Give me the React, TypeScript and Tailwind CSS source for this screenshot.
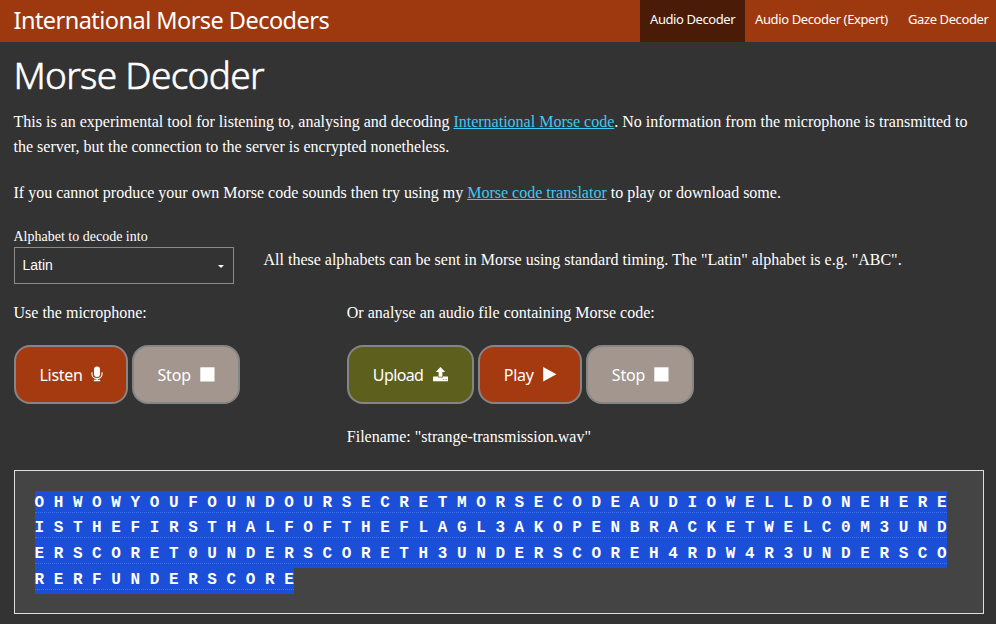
import React from "react";

const serif = "font-['Liberation_Serif',serif]";
const humanist = "font-['Noto_Sans','Open_Sans',sans-serif]";

const decodedRows = [
  "OHWOWYOUFOUNDOURSECRETMORSECODEAUDIOWELLDONEHERE",
  "ISTHEFIRSTHALFOFTHEFLAGL3AKOPENBRACKETWELC0M3UND",
  "ERSCORET0UNDERSCORETH3UNDERSCOREH4RDW4R3UNDERSCO",
  "RERFUNDERSCORE",
];

function MicIcon() {
  return (
    <svg width="12" height="16" viewBox="0 0 12 16" className="block" fill="none">
      <rect x="3" y="0.5" width="6" height="10.5" rx="3" fill="#fff" />
      <path d="M1 6.2V8.2C1 11 3 12.6 6 12.6S11 11 11 8.2V6.2" stroke="#fff" strokeWidth="1.1" />
      <path d="M6 12.5V14.5M2.8 14.5H9.2" stroke="#fff" strokeWidth="1.3" />
    </svg>
  );
}

function StopIcon() {
  return (
    <svg width="15" height="15" viewBox="0 0 15 15" className="block" fill="#fff">
      <rect x="0.3" y="0.3" width="14.2" height="14.2" />
    </svg>
  );
}

function UploadIcon() {
  return (
    <svg width="15" height="15" viewBox="0 0 15 15" className="block" fill="#fff">
      <path d="M7.5 0L12.2 5H9.4V9.7H5.6V5H2.8Z" />
      <path fillRule="evenodd" d="M0.3 9.6H5V10.5H10V9.6H14.7L15 10V14.2H0V10ZM10.3 12V12.8H11.3V12ZM12.6 12V12.8H13.6V12Z" />
    </svg>
  );
}

function PlayIcon() {
  return (
    <svg width="14" height="15" viewBox="0 0 14 15" className="block" fill="#fff">
      <path d="M0.2 0L13.4 7.3L0.2 14.5Z" />
    </svg>
  );
}

interface PadButtonProps {
  label: string;
  look: string;
  labelLook: string;
  children: React.ReactNode;
}

function PadButton({ label, look, labelLook, children }: PadButtonProps) {
  return (
    <button className={`flex h-[59px] shrink-0 items-center rounded-[16px] border-2 border-[#858585] pl-[24px] text-white ${humanist} ${look}`}>
      <span className={`mt-px shrink-0 whitespace-nowrap text-left text-[16px] leading-6 ${labelLook}`}>{label}</span>
      <span className="-mt-px">{children}</span>
    </button>
  );
}

export default function App() {
  return (
    <div className={`h-[624px] overflow-hidden bg-[#333] text-[16px] text-white ${serif}`}>
      <header className={`flex h-[42px] justify-between bg-[#9d380f] ${humanist}`}>
        <div className="whitespace-nowrap pl-[13.5px] text-[23.5px] leading-[41px] tracking-[-0.54px]">International Morse Decoders</div>
        <nav className="flex whitespace-nowrap text-[13px] leading-[39px]">
          <a className="w-[105px] bg-[#4a1b06] pl-[10px] tracking-[-0.42px]">Audio Decoder</a>
          <a className="w-[153px] pl-[10px] tracking-[-0.38px]">Audio Decoder (Expert)</a>
          <a className="w-[98px] pl-[10px] tracking-[-0.4px]">Gaze Decoder</a>
        </nav>
      </header>

      <main className="pl-[13.5px] pr-3">
        <h1 className={`h-[67px] whitespace-nowrap text-[37px] font-light leading-[66px] tracking-[-0.7px] [-webkit-text-stroke:0.6px_white] ${humanist}`}>Morse Decoder</h1>
        <p className="h-[71px] leading-[25.2px]">
          This is an experimental tool for listening to, analysing and decoding{" "}
          <a className="text-[#41c8f4] underline">International Morse code</a>. No information from the microphone is transmitted to
          the server, but the connection to the server is encrypted nonetheless.
        </p>
        <p className="h-[49px] leading-[25.6px]">
          If you cannot produce your own Morse code sounds then try using my{" "}
          <a className="text-[#41c8f4] underline">Morse code translator</a> to play or download some.
        </p>

        <div className="flex h-[71px]">
          <div className="w-[250px]">
            <div className="h-[18px] text-[14px] leading-[16px]">Alphabet to decode into</div>
            <div className="flex h-[37px] w-[220px] items-center justify-between border border-[#8a8a8a] pl-2 pr-[9px] font-['Liberation_Sans',sans-serif] text-[14px]">
              <span>Latin</span>
              <svg width="6" height="3" viewBox="0 0 6 3" fill="#fff" className="mt-px"><path d="M0 0H6L3 3Z" /></svg>
            </div>
          </div>
          <p className="pt-[18px] leading-[25.6px]">
            All these alphabets can be sent in Morse using standard timing. The "Latin" alphabet is e.g. "ABC".
          </p>
        </div>

        <div className="flex h-[170px]">
          <section className="w-[333.3px]">
            <p className="h-[45px] leading-[26px]">Use the microphone:</p>
            <div className="flex gap-1">
              <PadButton label="Listen" look="w-[114px] bg-[#a53a10]" labelLook="w-[51px] tracking-[-0.3px]"><MicIcon /></PadButton>
              <PadButton label="Stop" look="w-[108px] bg-[#a2968e]" labelLook="w-[42px] tracking-[-0.2px]"><StopIcon /></PadButton>
            </div>
          </section>
          <section>
            <p className="h-[45px] leading-[26px]">Or analyse an audio file containing Morse code:</p>
            <div className="flex gap-1">
              <PadButton label="Upload" look="w-[127px] bg-[#5d601d]" labelLook="w-[60px] tracking-[-0.6px]"><UploadIcon /></PadButton>
              <PadButton label="Play" look="w-[104px] bg-[#a53a10]" labelLook="w-[39.5px] tracking-[-0.3px]"><PlayIcon /></PadButton>
              <PadButton label="Stop" look="w-[108px] bg-[#a2968e]" labelLook="w-[42px] tracking-[-0.2px]"><StopIcon /></PadButton>
            </div>
            <p className="pt-5 leading-[26px]">Filename: "strange-transmission.wav"</p>
          </section>
        </div>

        <div className="h-[144px] w-[970px] border border-[#ddd] bg-[#444] pl-[20px] pt-[20px] font-['Liberation_Mono',monospace] text-[16px] font-bold">
          {decodedRows.map((row, index) => (
            <div key={row} className={`w-fit bg-[#1b4fd8] ${index === 0 ? "h-[25px]" : "h-[26px]"}`}>
              <div className="h-[22px] whitespace-pre border-b border-dotted border-[#3f72f0] leading-[24px]">
                {row.split("").join(" ")}
              </div>
            </div>
          ))}
        </div>
      </main>
    </div>
  );
}
